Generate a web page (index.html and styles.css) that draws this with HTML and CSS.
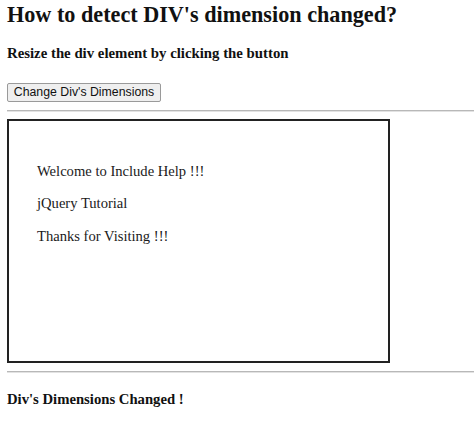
FILE: index.html
```html
<!DOCTYPE html>
<html>
<head>
<meta charset="utf-8">
<title>How to detect DIV's dimension changed?</title>
<link rel="stylesheet" href="styles.css">
</head>
<body>
<h1 class="title">How to detect DIV's dimension changed?</h1>
<h4 class="subtitle">Resize the div element by clicking the button</h4>
<button class="btn">Change Div's Dimensions</button>
<hr class="rule">
<div class="box">
  <p class="line">Welcome to Include Help !!!</p>
  <p class="line">jQuery Tutorial</p>
  <p class="line">Thanks for Visiting !!!</p>
</div>
<hr class="rule rule-bottom">
<h4 class="status">Div's Dimensions Changed !</h4>
</body>
</html>
```
FILE: styles.css
```css
html, body {
  background: #ffffff;
}
body {
  margin: 0;
  padding: 2px 0 0 7px;
  font-family: "Liberation Serif", "Times New Roman", serif;
  color: #111111;
}
.title {
  margin: 0;
  font-size: 22.2px;
  line-height: 26px;
  font-weight: bold;
}
.subtitle {
  margin: 17px 0 0 0;
  font-size: 14.8px;
  line-height: 17px;
  font-weight: bold;
}
.btn {
  display: block;
  margin: 21px 0 0 0;
  box-sizing: border-box;
  height: 19px;
  width: 154px;
  padding: 0;
  white-space: nowrap;
  font-family: "Liberation Sans", Arial, sans-serif;
  font-size: 12.3px;
  line-height: 17px;
  color: #111111;
  background: #efefef;
  border: 1px solid #9a9a9a;
  border-radius: 2px;
  text-align: center;
}
.rule {
  margin: 7.5px 0 0 0;
  height: 0;
  border: 0;
  border-top: 1px solid #b8b8b8;
  border-bottom: 1px solid #e2e2e2;
}
.box {
  margin-top: 7.5px;
  box-sizing: border-box;
  width: 383px;
  height: 244px;
  border: 2px solid #222222;
  padding: 27.6px 28px;
}
.line {
  margin: 14.7px 0;
  font-size: 14.6px;
  line-height: 17.5px;
  color: #1a1a1a;
}
.rule-bottom {
  margin-top: 7.5px;
}
.status {
  margin: 18.3px 0 0 0;
  font-size: 14.7px;
  line-height: 17px;
  font-weight: bold;
}
```
